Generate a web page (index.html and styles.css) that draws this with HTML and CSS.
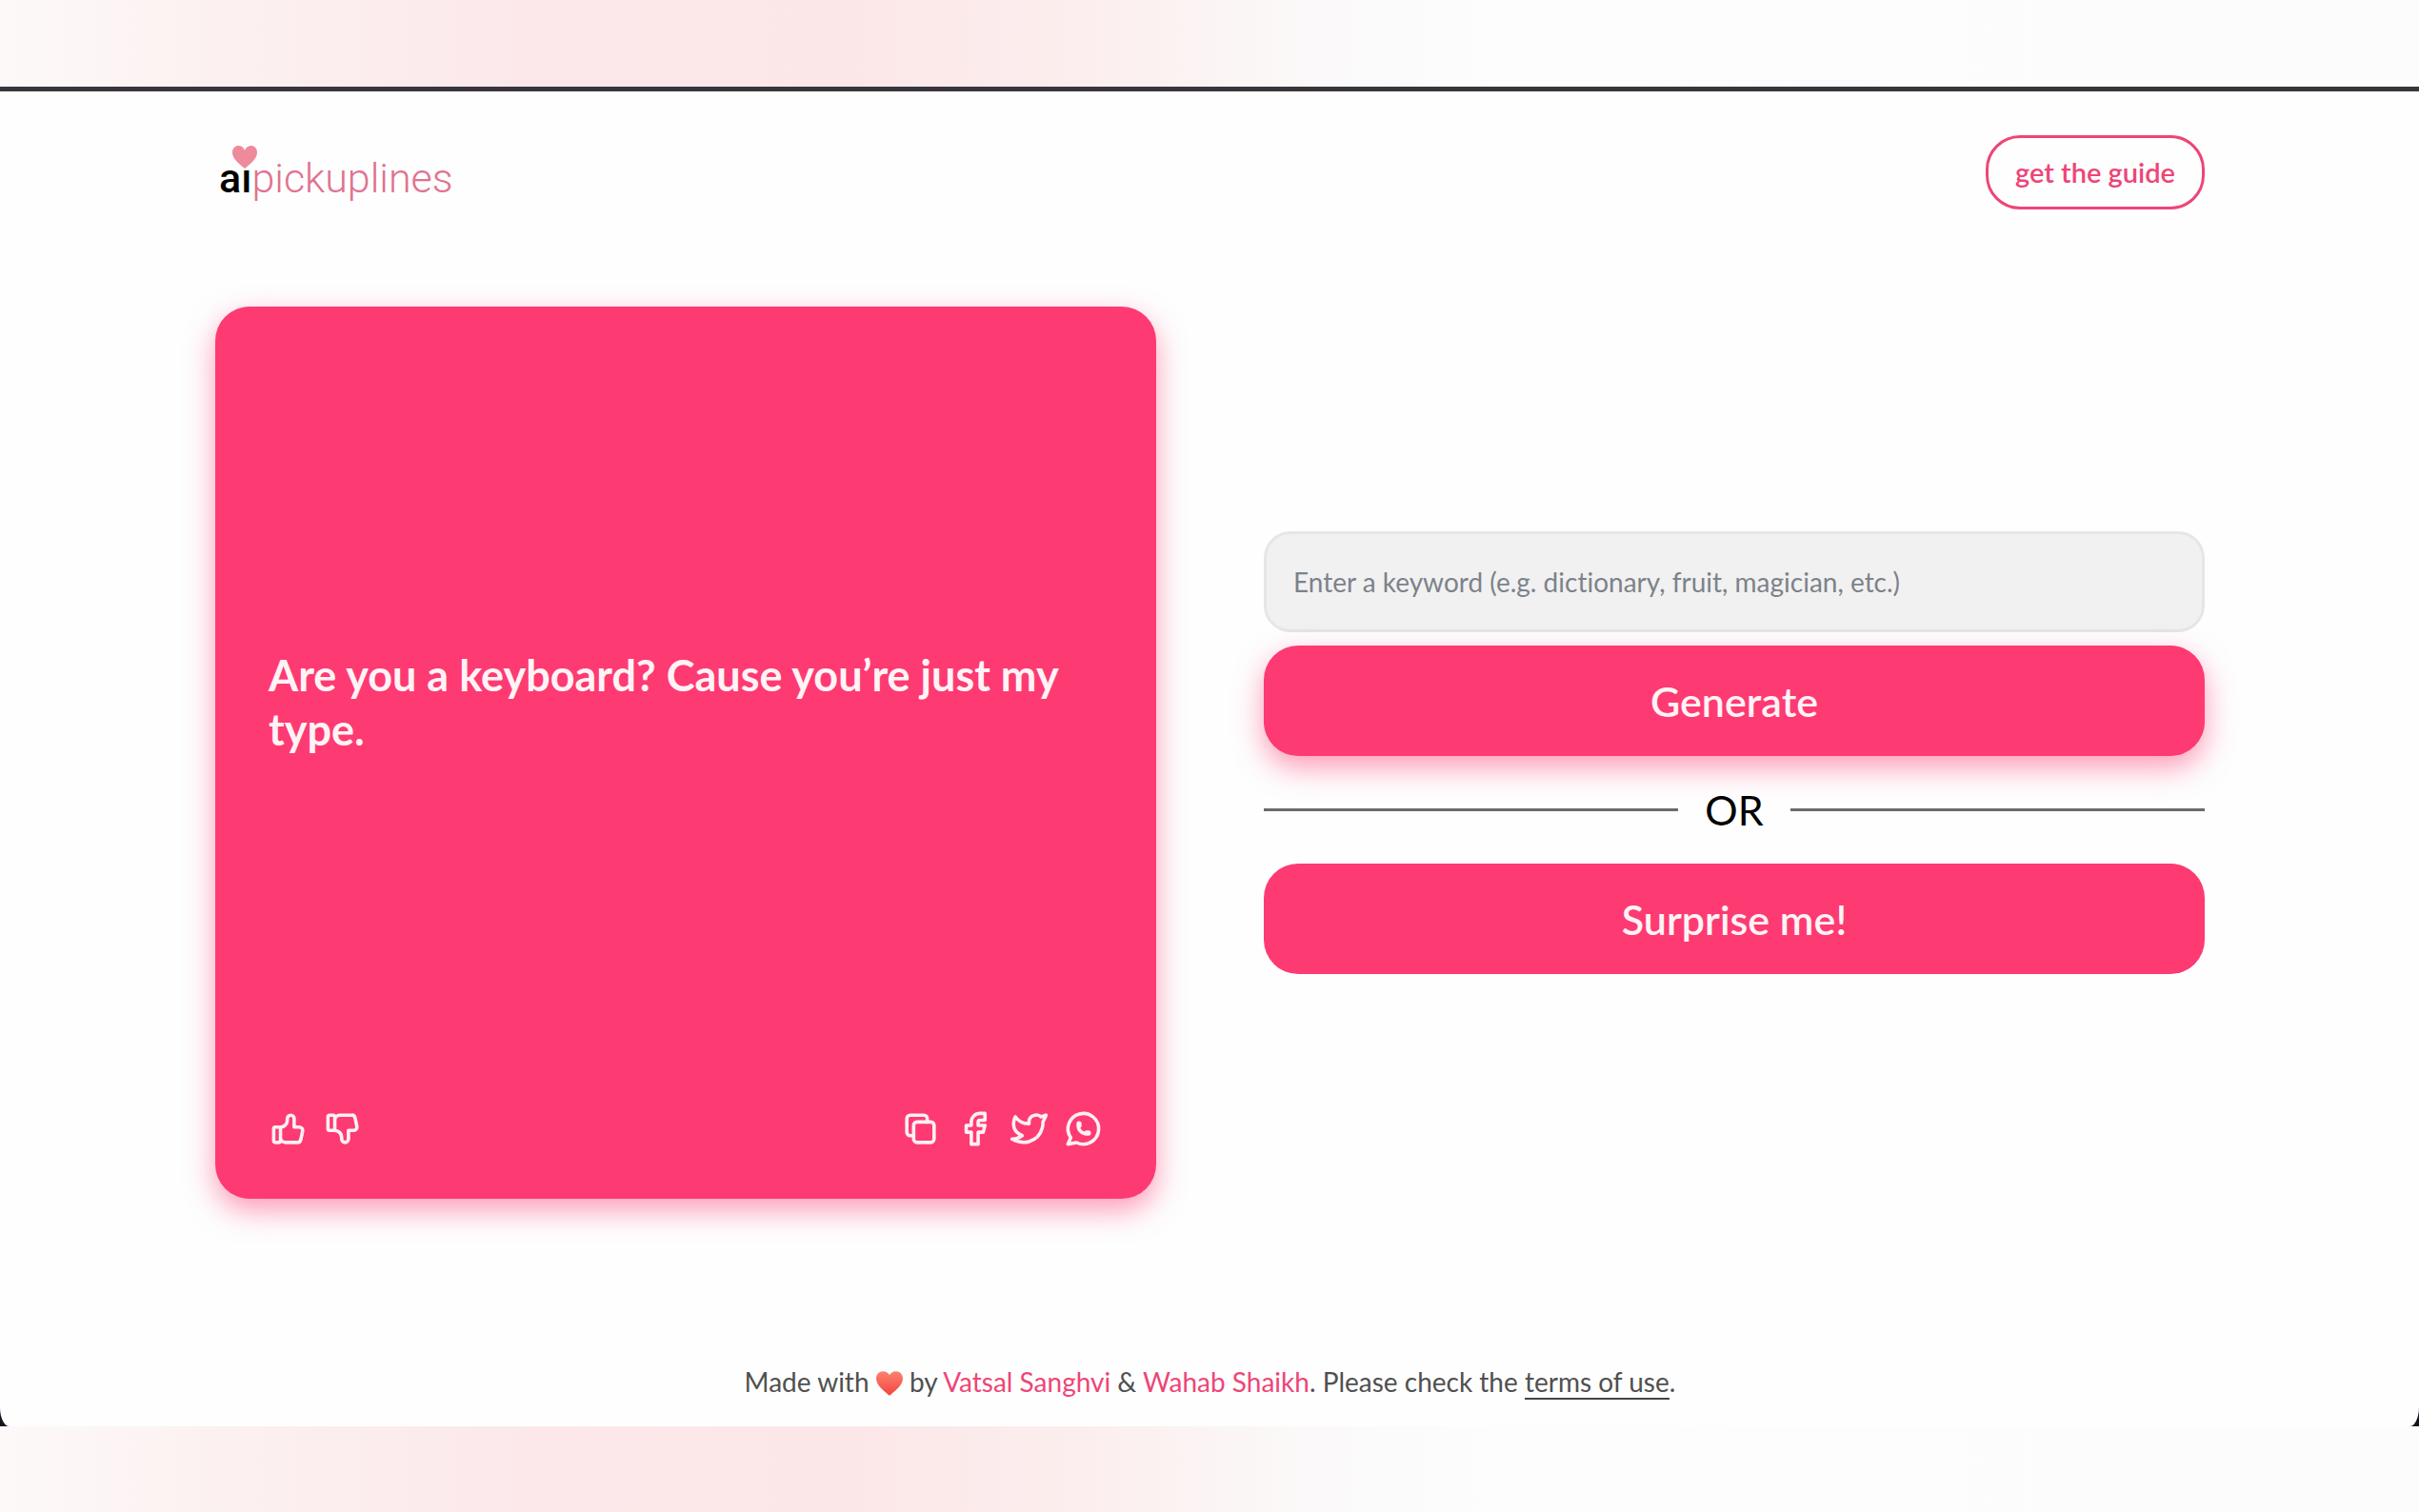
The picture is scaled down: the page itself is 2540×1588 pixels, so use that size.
FILE: index.html
```html
<!DOCTYPE html>
<html lang="en">
<head>
  <meta charset="UTF-8">
  <meta name="viewport" content="width=device-width, initial-scale=1.0">
  <title>aipickuplines</title>
  <link rel="stylesheet" href="styles.css">
</head>
<body>
  <div class="window">
    <div class="page">
      <header class="header">
        <a class="logo" href="#" aria-label="aipickuplines">
          <span class="logo-ai">aı<svg class="logo-heart" viewBox="0 0 24 22" aria-hidden="true"><path d="M12 22C8 18.500 0 13 0 6.500C0 2.500 2.800 0 6 0C9 0 11.200 2 12 4.500C12.800 2 15 0 18 0C21.200 0 24 2.500 24 6.500C24 13 16 18.500 12 22Z"/></svg></span><span class="logo-rest">pickuplines</span>
        </a>
        <a class="guide" href="#">get the guide</a>
      </header>

      <main class="main">
        <section class="card">
          <p class="quote">Are you a keyboard? Cause you’re just my type.</p>
          <div class="actions">
            <div class="group">
              <button class="icon-btn" type="button" aria-label="Like">
                <svg viewBox="0 0 24 24"><path d="M7 11v8a1 1 0 0 1-1 1H4a1 1 0 0 1-1-1v-7a1 1 0 0 1 1-1h3a4 4 0 0 0 4-4V6a2 2 0 0 1 4 0v5h3a2 2 0 0 1 2 2l-1 5a2 3 0 0 1-2 2h-7a3 3 0 0 1-3-3"/></svg>
              </button>
              <button class="icon-btn" type="button" aria-label="Dislike">
                <svg viewBox="0 0 24 24"><path d="M7 13V5a1 1 0 0 0-1-1H4a1 1 0 0 0-1 1v7a1 1 0 0 0 1 1h3a4 4 0 0 1 4 4v1a2 2 0 0 0 4 0v-5h3a2 2 0 0 0 2-2l-1-5a2 3 0 0 0-2-2h-7a3 3 0 0 0-3 3"/></svg>
              </button>
            </div>
            <div class="group">
              <button class="icon-btn" type="button" aria-label="Copy">
                <svg viewBox="0 0 24 24"><rect x="8" y="8" width="12" height="12" rx="2"/><path d="M16 8V6a2 2 0 0 0-2-2H6a2 2 0 0 0-2 2v8a2 2 0 0 0 2 2h2"/></svg>
              </button>
              <a class="icon-btn" href="#" aria-label="Share on Facebook">
                <svg viewBox="0 0 24 24"><path d="M7 10v4h3v7h4v-7h3l1-4h-4V8a1 1 0 0 1 1-1h3V3h-3a5 5 0 0 0-5 5v2H7"/></svg>
              </a>
              <a class="icon-btn" href="#" aria-label="Share on Twitter">
                <svg viewBox="0 0 24 24"><path d="M22 4.010c-1 .49-1.980.689-3 .99-1.121-1.265-2.783-1.335-4.380-.737S11.977 6.323 12 8v1c-3.245.083-6.135-1.395-8-4 0 0-4.182 7.433 4 11-1.872 1.247-3.739 2.088-6 2 3.308 1.803 6.913 2.423 10.034 1.517 3.580-1.040 6.522-3.723 7.651-7.742a13.840 13.840 0 0 0 .497-3.753C20.180 7.773 21.692 5.250 22 4.009z"/></svg>
              </a>
              <a class="icon-btn" href="#" aria-label="Share on WhatsApp">
                <svg viewBox="0 0 24 24"><path d="M3 21l1.650-3.800a9 9 0 1 1 3.400 2.900L3 21"/><path d="M9 10a.5.5 0 0 0 1 0V9a.5.5 0 0 0-1 0v1a5 5 0 0 0 5 5h1a.5.5 0 0 0 0-1h-1a.5.5 0 0 0 0 1"/></svg>
              </a>
            </div>
          </div>
        </section>

        <form class="form">
          <input class="keyword" type="text" aria-label="Keyword" placeholder="Enter a keyword (e.g. dictionary, fruit, magician, etc.)">
          <button class="btn btn-shadow" type="button">Generate</button>
          <div class="or">OR</div>
          <button class="btn" type="button">Surprise me!</button>
        </form>
      </main>

      <footer class="footer">
        Made with <svg class="heart" viewBox="0 0 24 22" role="img" aria-label="love"><defs><linearGradient id="red" x1="0" y1="0" x2="0" y2="1"><stop offset="0" stop-color="#fb8270"/><stop offset="1" stop-color="#f4453f"/></linearGradient></defs><path fill="url(#red)" d="M12 22C8 18.500 0 13 0 6.500C0 2.500 2.800 0 6 0C9 0 11.200 1.500 12 3.500C12.800 1.500 15 0 18 0C21.200 0 24 2.500 24 6.500C24 13 16 18.500 12 22Z"/></svg> by <a class="author" href="#">Vatsal Sanghvi</a> &amp; <a class="author" href="#">Wahab Shaikh</a>. Please check the <a class="terms" href="#">terms of use</a>.
      </footer>
    </div>
  </div>
</body>
</html>
```
FILE: styles.css
```css
* {
  box-sizing: border-box;
}
body {
  margin: 0;
  padding: 91px 0 90px;
  min-height: 100vh;
  display: flex;
  flex-direction: column;
  font-family: Lato, sans-serif;
  font-size: 28px;
  font-variant-ligatures: none;
  color: #505050;
  background: linear-gradient(90deg, #fdf9f9 0%, #fcf0f0 10%, #fce8ea 22%, #fce7e8 35%, #fceeee 45%, #fbf9f9 54%, #fdfdfd 62%, #fdfcfd 100%);
}
.window {
  flex: 1;
  display: flex;
  background: #16121f;
  border-top: 5px solid #39363b;
}
.page {
  flex: 1;
  display: flex;
  flex-direction: column;
  padding: 46px 225px 25px 226px;
  background: #fefefe;
  border-radius: 0 0 10px 10px / 0 0 20px 20px;
}
.header {
  display: flex;
  justify-content: space-between;
  align-items: center;
  margin-bottom: 102px;
}
.logo {
  padding: 12px 0 0 4px;
  font-family: Roboto, sans-serif;
  font-size: 43px;
  line-height: 60px;
  color: #e0738f;
  text-decoration: none;
}
.logo-ai {
  position: relative;
  font-weight: 500;
  color: #000;
}
.logo-rest {
  font-weight: 300;
}
.logo-heart {
  position: absolute;
  right: -6px;
  top: -9px;
  width: 26px;
  height: 24px;
  fill: #ee8a9c;
}
.guide {
  padding: 0 28px;
  border: 3px solid #ee4577;
  border-radius: 36px;
  font-size: 29px;
  font-weight: 600;
  line-height: 72px;
  color: #ee4577;
  text-decoration: none;
}
.main {
  flex: 1;
  display: grid;
  grid-template-columns: 1fr 1fr;
  gap: 113px;
}
.card {
  display: flex;
  flex-direction: column;
  padding: 57px 55px 52px 56px;
  border-radius: 36px;
  background: #fe3a72;
  box-shadow: 0 12px 30px rgba(254, 58, 114, 0.5);
}
.quote {
  flex: 1;
  display: flex;
  align-items: center;
  margin: 0 0 67px;
  font-size: 45px;
  font-weight: 700;
  line-height: 57px;
  color: #fff3f6;
}
.actions {
  display: flex;
  justify-content: space-between;
}
.group {
  display: flex;
  gap: 14px;
}
.icon-btn {
  padding: 0;
  border: none;
  background: none;
  cursor: pointer;
}
.icon-btn svg {
  display: block;
  width: 43px;
  height: 43px;
  fill: none;
  stroke: #fff0f4;
  stroke-width: 2;
  stroke-linecap: round;
  stroke-linejoin: round;
}
.form {
  align-self: center;
  display: flex;
  flex-direction: column;
}
.keyword {
  width: 100%;
  height: 106px;
  margin-bottom: 14px;
  padding: 0 28px;
  border: 3px solid #e5e6e6;
  border-radius: 28px;
  background: #f1f1f1;
  font-family: inherit;
  font-size: 28px;
  font-variant-ligatures: none;
  color: #444;
}
.keyword::placeholder {
  color: #7d828a;
  opacity: 1;
}
.btn {
  height: 116px;
  border: none;
  border-radius: 36px;
  background: #fe3a72;
  font-family: inherit;
  font-size: 43px;
  font-weight: 600;
  color: #fff3f6;
  cursor: pointer;
}
.btn-shadow {
  box-shadow: 0 12px 30px rgba(254, 58, 114, 0.5);
}
.or {
  display: flex;
  align-items: center;
  gap: 28px;
  font-size: 43px;
  line-height: 57px;
  margin: 28px 0;
  color: #000;
}
.or::before,
.or::after {
  content: "";
  flex: 1;
  height: 3px;
  background: #6b6b6b;
}
.footer {
  margin-top: 170px;
  text-align: center;
  line-height: 44px;
}
.heart {
  width: 28px;
  height: 26px;
  vertical-align: -4px;
}
.author {
  color: #ee4577;
  text-decoration: none;
}
.terms {
  color: inherit;
  text-decoration: none;
  border-bottom: 2px solid #444;
}
```
